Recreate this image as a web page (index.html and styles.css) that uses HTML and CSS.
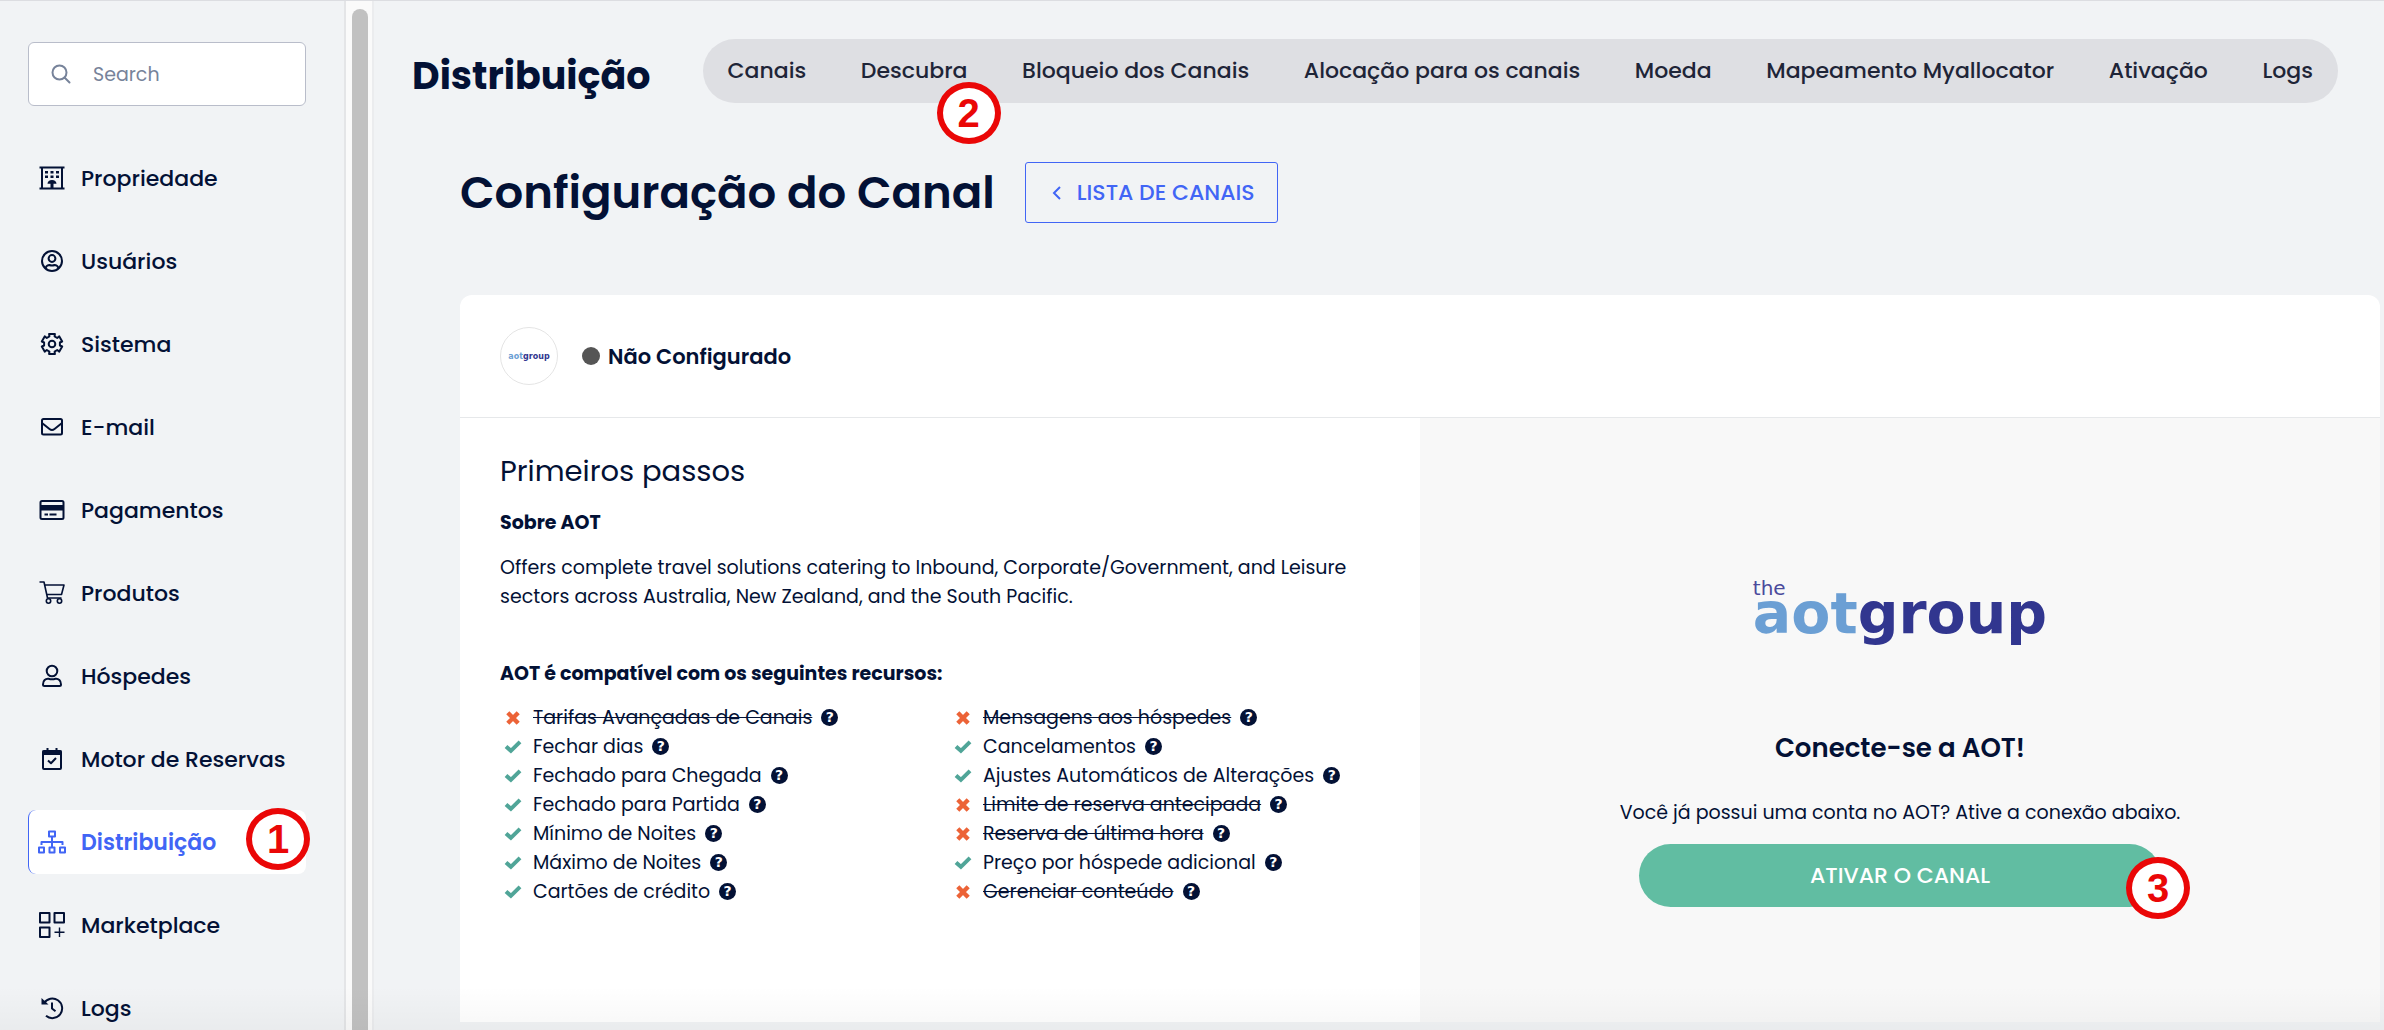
FILE: index.html
```html
<!DOCTYPE html>
<html lang="pt-BR">
<head>
  <meta charset="UTF-8" />
  <meta name="viewport" content="width=device-width, initial-scale=1" />
  <title>Distribuição - Configuração do Canal</title>
  <link rel="stylesheet" href="styles.css">
</head>
<body>

  <!-- Shared icons -->
  <svg class="sprite" aria-hidden="true">
    <symbol id="check" viewBox="0 0 18 18"><path d="M2 8.400 L6.900 12.800 L16 3.800" fill="none" stroke="#50a598" stroke-width="4"/></symbol>
    <symbol id="cross" viewBox="0 0 18 18"><path d="M3.800 3.800 L14.200 14.200 M14.200 3.800 L3.800 14.200" fill="none" stroke="#ec6337" stroke-width="4.4"/></symbol>
  </svg>

  <div class="app">
    <aside class="sidebar">
      <label class="search">
        <svg class="search-icon" viewBox="0 0 20 20"><circle cx="8.5" cy="8.5" r="7"/><path d="M13.5 13.5 L18.5 18.5"/></svg>
        <input type="text" placeholder="Search" aria-label="Search" />
      </label>

      <nav class="menu">
        <a class="menu-item" href="#">
          <svg class="icon" viewBox="0 0 28 28"><path d="M1.5 3.5H26.5M1.5 24.5H26.5M4 3.5V24.5M24 3.5V24.5"/><path class="solid" d="M7 7h3v2.4H7zM12.5 7h3v2.4h-3zM18 7h3v2.4h-3zM7 11.5h3v2.4H7zM12.5 11.5h3v2.4h-3zM18 11.5h3v2.4h-3zM9.5 19.8c0-2.4 2-3.8 4.5-3.8s4.5 1.4 4.5 3.8h-3V24h-3v-4.200z"/></svg>
          Propriedade
        </a>
        <a class="menu-item" href="#">
          <svg class="icon" viewBox="0 0 28 28"><circle cx="14" cy="14" r="10"/><circle cx="14" cy="11.500" r="3.400"/><path d="M7.500 21C8.500 18.500 10.500 18 11.500 18C13 18.600 15 18.600 16.500 18C17.500 18 19.500 18.500 20.500 21"/></svg>
          Usuários
        </a>
        <a class="menu-item" href="#">
          <svg class="icon" viewBox="0 0 28 28"><path d="M11.100 3.900H16.900L16.600 6.400L19.200 8L21.300 6.400L24.200 11.500L21.900 12.500V15.500L24.200 16.500L21.300 21.600L19.200 20L16.600 21.600L16.900 24.100H11.100L11.400 21.600L8.800 20L6.700 21.600L3.800 16.500L6.100 15.500V12.500L3.800 11.500L6.700 6.400L8.800 8L11.400 6.400Z"/><circle cx="14" cy="14" r="3.300"/></svg>
          Sistema
        </a>
        <a class="menu-item" href="#">
          <svg class="icon" viewBox="0 0 28 28"><rect x="4" y="6" width="20" height="15.500" rx="1.500"/><path d="M4 10L11.500 16Q14 18 16.500 16L24 10"/></svg>
          E-mail
        </a>
        <a class="menu-item" href="#">
          <svg class="icon" viewBox="0 0 28 28"><rect x="2.500" y="5" width="23" height="18" rx="1.500"/><path class="solid" d="M2 9H26V14.500H2zM6.500 17.500H10V19.500H6.500zM11.500 17.500H18.500V19.500H11.500z"/></svg>
          Pagamentos
        </a>
        <a class="menu-item" href="#">
          <svg class="icon thin" viewBox="0 0 28 28"><path d="M1.500 3H6L9.500 19H23.500M6.800 6H26L23.500 15.500H8.800"/><circle cx="10.500" cy="22" r="2.200"/><circle cx="21.500" cy="22" r="2.200"/></svg>
          Produtos
        </a>
        <a class="menu-item" href="#">
          <svg class="icon" viewBox="0 0 28 28"><circle cx="14" cy="9" r="5.300"/><path d="M5 22.500C5 18.500 7.500 16.500 10.500 16.800C13 17.600 15 17.600 17.500 16.800C20.500 16.500 23 18.500 23 22.500Q23 24 21.500 24H6.500Q5 24 5 22.500Z"/></svg>
          Hóspedes
        </a>
        <a class="menu-item" href="#">
          <svg class="icon" viewBox="0 0 28 28"><rect x="5" y="6" width="18" height="18" rx="1"/><path d="M9.500 3V7M18.500 3V7M10 15.500L13 18.200L18 13"/><path class="solid" d="M4.500 5.500H23.500V10H4.500z"/></svg>
          Motor de Reservas
        </a>
        <a class="menu-item active" href="#" aria-current="page">
          <svg class="icon" viewBox="0 0 28 28"><path d="M11 3.500H17V8.500H11zM1 19.500H6V24.500H1zM11.500 19.500H16.500V24.500H11.500zM22 19.500H27V24.500H22zM14 8.500V19.500M3.500 17V14H24.500V17"/></svg>
          Distribuição
          <span class="step step-menu">1</span>
        </a>
        <a class="menu-item" href="#">
          <svg class="icon" viewBox="0 0 28 28"><path d="M2 2H11.500V11.500H2zM16.500 2H26V11.500H16.500zM2 16.500H11.500V26H2z"/><path class="hair" d="M21.500 16.500V26M16.500 21.200H26.500"/></svg>
          Marketplace
        </a>
        <a class="menu-item" href="#">
          <svg class="icon" viewBox="0 0 28 28"><path d="M6 9.200A9.800 9.800 0 1 1 8 21.800M14 8.500V14.500L17.500 17.200"/><path class="solid" d="M3.500 4L10.500 10.500H3.500z"/></svg>
          Logs
        </a>
      </nav>
    </aside>

    <div class="scroll-track"><div class="scroll-thumb"></div></div>

    <main class="main">
      <header class="topbar">
        <h2 class="section-title">Distribuição</h2>
        <nav class="tabs">
          <a href="#">Canais</a>
          <a href="#">Descubra<span class="step step-tab">2</span></a>
          <a href="#">Bloqueio dos Canais</a>
          <a href="#">Alocação para os canais</a>
          <a href="#">Moeda</a>
          <a href="#">Mapeamento Myallocator</a>
          <a href="#">Ativação</a>
          <a href="#">Logs</a>
        </nav>
      </header>

      <div class="heading">
        <h1>Configuração do Canal</h1>
        <button class="back" type="button">
          <svg class="chevron" viewBox="0 0 10 16"><path d="M8 2L2 8L8 14"/></svg>
          LISTA DE CANAIS
        </button>
      </div>

      <section class="card">
        <div class="card-head">
          <span class="avatar"><span class="aot">aot</span><span class="group">group</span></span>
          <span class="dot"></span>
          <strong class="status">Não Configurado</strong>
        </div>

        <div class="card-body">
          <div class="info">
            <h3>Primeiros passos</h3>
            <h4>Sobre AOT</h4>
            <p>Offers complete travel solutions catering to Inbound, Corporate/Government, and Leisure sectors across Australia, New Zealand, and the South Pacific.</p>
            <h4>AOT é compatível com os seguintes recursos:</h4>
            <div class="features">
              <ul>
                <li><svg class="mark"><use href="#cross"/></svg><s>Tarifas Avançadas de Canais</s><span class="help">?</span></li>
                <li><svg class="mark"><use href="#check"/></svg>Fechar dias<span class="help">?</span></li>
                <li><svg class="mark"><use href="#check"/></svg>Fechado para Chegada<span class="help">?</span></li>
                <li><svg class="mark"><use href="#check"/></svg>Fechado para Partida<span class="help">?</span></li>
                <li><svg class="mark"><use href="#check"/></svg>Mínimo de Noites<span class="help">?</span></li>
                <li><svg class="mark"><use href="#check"/></svg>Máximo de Noites<span class="help">?</span></li>
                <li><svg class="mark"><use href="#check"/></svg>Cartões de crédito<span class="help">?</span></li>
              </ul>
              <ul>
                <li><svg class="mark"><use href="#cross"/></svg><s>Mensagens aos hóspedes</s><span class="help">?</span></li>
                <li><svg class="mark"><use href="#check"/></svg>Cancelamentos<span class="help">?</span></li>
                <li><svg class="mark"><use href="#check"/></svg>Ajustes Automáticos de Alterações<span class="help">?</span></li>
                <li><svg class="mark"><use href="#cross"/></svg><s>Limite de reserva antecipada</s><span class="help">?</span></li>
                <li><svg class="mark"><use href="#cross"/></svg><s>Reserva de última hora</s><span class="help">?</span></li>
                <li><svg class="mark"><use href="#check"/></svg>Preço por hóspede adicional<span class="help">?</span></li>
                <li><svg class="mark"><use href="#cross"/></svg><s>Gerenciar conteúdo</s><span class="help">?</span></li>
              </ul>
            </div>
          </div>

          <div class="connect">
            <div class="logo">
              <span class="the">the</span>
              <span class="wordmark"><span class="aot">aot</span><span class="group">group</span></span>
            </div>
            <h3>Conecte-se a AOT!</h3>
            <p>Você já possui uma conta no AOT? Ative a conexão abaixo.</p>
            <div class="activate-wrap">
              <button class="activate" type="button">ATIVAR O CANAL</button>
              <span class="step step-button">3</span>
            </div>
          </div>
        </div>
      </section>
    </main>
  </div>

</body>
</html>
```
FILE: styles.css
```css
* {
  box-sizing: border-box;
}

body {
  margin: 0;
  font-family: Poppins, Inter, "Open Sans", sans-serif;
  font-size: 19px;
  color: #031135;
  background: #f1f3f5;
}

h1, h2, h3, h4, p, ul {
  margin: 0;
  padding: 0;
}

a {
  color: inherit;
  text-decoration: none;
}

button, input {
  font-family: inherit;
}

.sprite {
  position: absolute;
  width: 0;
  height: 0;
}

.app {
  position: relative;
  display: flex;
  height: 100vh;
  border-top: 1px solid #dcdde1;
  overflow: hidden;
}

/* soft shade along the bottom edge of the window */
.app::after {
  content: "";
  position: absolute;
  left: 0;
  right: 0;
  bottom: 0;
  height: 44px;
  background: linear-gradient(rgba(0, 0, 0, 0), rgba(0, 0, 0, 0.03));
  pointer-events: none;
}

/* Sidebar */
.sidebar {
  flex: 0 0 346px;
  padding: 41px 38px 0 28px;
  border-right: 2px solid #e4e5e7;
  overflow: hidden;
}

.search {
  display: flex;
  align-items: center;
  gap: 22px;
  height: 64px;
  padding: 0 22px;
  background: #fff;
  border: 1px solid #b9bdca;
  border-radius: 6px;
}

.search-icon {
  flex: none;
  width: 20px;
  height: 20px;
  fill: none;
  stroke: #77839a;
  stroke-width: 2;
  stroke-linecap: round;
}

.search input {
  width: 100%;
  min-width: 0;
  padding: 0;
  border: 0;
  outline: 0;
  font-size: 19px;
  color: #031135;
  background: none;
}

.search input::placeholder {
  color: #77839a;
  opacity: 1;
}

.menu {
  display: flex;
  flex-direction: column;
  gap: 19px;
  margin-top: 40px;
}

.menu-item {
  position: relative;
  display: flex;
  flex: none;
  align-items: center;
  gap: 15px;
  height: 64px;
  padding-left: 9px;
  border-left: 1px solid transparent;
  border-radius: 8px;
  font-size: 22px;
  font-weight: 500;
  white-space: nowrap;
}

.menu-item.active {
  color: #4165f5;
  background: #fff;
  border-left-color: #4165f5;
  font-weight: 600;
}

.icon {
  flex: none;
  width: 28px;
  height: 28px;
  fill: none;
  stroke: currentColor;
  stroke-width: 2;
  stroke-linejoin: round;
}

.icon.thin {
  stroke-width: 1.6;
}

.icon .hair {
  stroke-width: 1.4;
}

.icon .solid {
  fill: currentColor;
  stroke: none;
}

.scroll-track {
  flex: 0 0 28px;
  padding: 8px 4px 0 6px;
  background: #fafafa;
  border-right: 2px solid #ebecee;
}

.scroll-thumb {
  width: 16px;
  height: 100%;
  background: #c1c1c1;
  border-radius: 8px 8px 0 0;
}

/* Numbered markers */
.step {
  position: absolute;
  z-index: 2;
  width: 64px;
  height: 62px;
  border: 6px solid #ea0707;
  border-radius: 50%;
  background: #fff;
  color: #ea0707;
  font-family: "Liberation Sans", sans-serif;
  font-size: 40px;
  font-weight: 700;
  line-height: 50px;
  text-align: center;
}

.step-menu {
  right: -4px;
  top: -2px;
}

.step-tab {
  right: -33px;
  top: 43px;
}

.step-button {
  right: -29px;
  top: 13px;
}

/* Main */
.main {
  flex: 1;
  display: flex;
  flex-direction: column;
  min-width: 0;
  padding: 38px 4px 8px 38px;
}

.topbar {
  display: flex;
  align-items: center;
  gap: 52px;
  padding-right: 42px;
}

.section-title {
  padding-top: 10px;
  font-size: 38px;
  font-weight: 700;
  line-height: 54px;
}

.tabs {
  flex: 1;
  display: flex;
  justify-content: space-between;
  height: 64px;
  padding: 0 25px;
  border-radius: 32px;
  background: #dedfe3;
  color: #1e2538;
  font-size: 22px;
  font-weight: 500;
  line-height: 64px;
  white-space: nowrap;
}

.tabs a {
  position: relative;
}

.heading {
  display: flex;
  align-items: center;
  gap: 30px;
  margin: 59px 0 72px 48px;
}

.heading h1 {
  font-size: 45px;
  font-weight: 600;
  line-height: 61px;
}

.back {
  display: flex;
  align-items: center;
  gap: 15px;
  height: 61px;
  padding: 0 22px 0 26px;
  border: 1px solid #4165f5;
  border-radius: 3px;
  background: none;
  color: #4165f5;
  font-size: 22px;
  font-weight: 500;
}

.chevron {
  width: 10px;
  height: 16px;
  fill: none;
  stroke: currentColor;
  stroke-width: 2;
}

.card {
  flex: 1;
  display: flex;
  flex-direction: column;
  margin-left: 48px;
  border-radius: 12px 12px 0 0;
  background: #fff;
  overflow: hidden;
}

.card-head {
  display: flex;
  align-items: center;
  height: 123px;
  padding: 0 40px;
  border-bottom: 1px solid #e6e8ea;
}

.avatar {
  display: flex;
  align-items: center;
  justify-content: center;
  width: 58px;
  height: 58px;
  border: 1px solid #e4e4e4;
  border-radius: 50%;
  font-family: "DejaVu Sans", sans-serif;
  font-size: 8px;
  font-weight: 700;
}

.aot {
  color: #6b9fd4;
}

.group {
  color: #31368f;
}

.dot {
  width: 18px;
  height: 18px;
  margin: 0 8px 0 24px;
  border-radius: 50%;
  background: #555;
}

.status {
  font-size: 21px;
  font-weight: 600;
}

.card-body {
  flex: 1;
  display: grid;
  grid-template-columns: 1fr 1fr;
}

.info {
  padding: 32px 40px;
}

.info h3 {
  font-size: 29px;
  font-weight: 400;
  line-height: 42px;
}

.info h4 {
  margin-top: 16px;
  font-size: 19px;
  font-weight: 700;
  line-height: 29px;
}

.info p {
  margin: 16px 0 48px;
  line-height: 29px;
}

.features {
  display: grid;
  grid-template-columns: 1fr 1fr;
  gap: 20px;
  margin-top: 15px;
}

.features ul {
  list-style: none;
}

.features li {
  display: flex;
  align-items: center;
  height: 29px;
  padding-left: 4px;
  white-space: nowrap;
}

.features s {
  text-decoration-thickness: 1px;
}

.mark {
  flex: none;
  width: 18px;
  height: 18px;
  margin-right: 11px;
}

.help {
  width: 17px;
  height: 17px;
  margin-left: 9px;
  border-radius: 50%;
  background: #031135;
  color: #fff;
  font-family: "DejaVu Sans", sans-serif;
  font-size: 14px;
  font-weight: 700;
  line-height: 17px;
  text-align: center;
}

.connect {
  display: flex;
  flex-direction: column;
  align-items: center;
  padding-top: 160px;
  background: #f8f8f8;
}

.logo {
  display: flex;
  flex-direction: column;
  font-family: "DejaVu Sans", sans-serif;
}

.the {
  color: #4a4a9c;
  font-size: 20px;
  line-height: 20px;
}

.wordmark {
  font-size: 57px;
  font-weight: 700;
  line-height: 30px;
}

.connect h3 {
  margin-top: 100px;
  font-size: 26px;
  font-weight: 600;
  line-height: 40px;
}

.connect p {
  margin: 30px 0 17px;
  line-height: 29px;
}

.activate-wrap {
  position: relative;
  width: 522px;
}

.activate {
  width: 100%;
  height: 63px;
  border: 0;
  border-radius: 32px;
  background: #61bda2;
  color: #fff;
  font-size: 22px;
  font-weight: 500;
}
```
